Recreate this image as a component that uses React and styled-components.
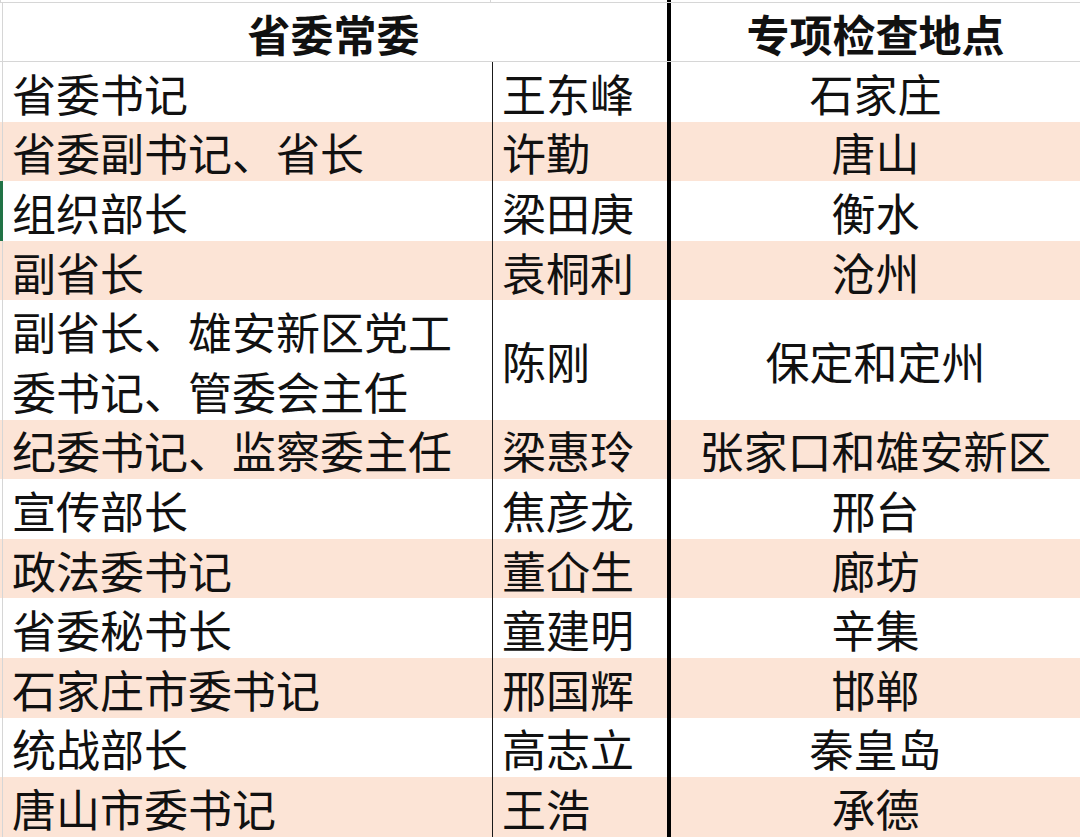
import React from "react";
import styled, { createGlobalStyle } from "styled-components";

const GlobalStyle = createGlobalStyle`
  html, body {
    margin: 0;
    padding: 0;
    background: #ffffff;
  }
  body {
    font-family: "Noto Sans CJK SC", "Noto Sans", sans-serif;
    color: #111;
  }
`;

const ROW_H = 59.6;
const PINK = "#fce4d6";

const Sheet = styled.div`
  width: 1080px;
  height: 837px;
  overflow: hidden;
  position: relative;
  background: #fff;
`;

const TopStrip = styled.div`
  display: grid;
  grid-template-columns: 490px 177px 4px 1fr;
  height: 3px;
  border-bottom: 1px solid #d6d6d6;
  box-sizing: border-box;
`;

const StripCell = styled.div`
  border-left: ${(p) => (p.$thick ? "4px solid #000" : "1px solid #d6d6d6")};
`;

const Row = styled.div`
  position: relative;
  display: grid;
  grid-template-columns: 492px 175px 1fr;
  height: ${(p) => (p.$tall ? ROW_H * 2 : ROW_H)}px;
  background: ${(p) => (p.$shade ? PINK : "#fff")};
  box-sizing: border-box;
  font-size: 44px;
  line-height: 1;

  &::before {
    content: "";
    position: absolute;
    left: 2px;
    top: 0;
    bottom: 0;
    width: 1px;
    background: #d6d6d6;
  }

  &::after {
    content: "";
    display: ${(p) => (p.$marked ? "block" : "none")};
    position: absolute;
    left: 0;
    top: 0;
    bottom: 0;
    width: 3px;
    background: #217346;
  }
`;

const HeaderRow = styled(Row)`
  grid-template-columns: 667px 1fr;
  height: 59px;
  border-bottom: 1px solid #d6d6d6;
  font-weight: 700;
  font-size: 43px;
`;

const HeaderCell = styled.div`
  display: flex;
  align-items: center;
  justify-content: center;
  padding-top: 2px;
  box-sizing: border-box;
  border-left: ${(p) => (p.$thick ? "4px solid #000" : "none")};
`;

const TitleCell = styled.div`
  display: flex;
  flex-direction: column;
  justify-content: center;
  gap: 16px;
  padding: 2px 0 0 12px;
  box-sizing: border-box;
  white-space: nowrap;
`;

const PersonCell = styled.div`
  display: flex;
  align-items: center;
  padding: 2px 0 0 9px;
  box-sizing: border-box;
  border-left: 1.5px solid #1a1a1a;
  white-space: nowrap;
`;

const PlaceCell = styled.div`
  display: flex;
  align-items: center;
  justify-content: center;
  padding-top: 2px;
  box-sizing: border-box;
  border-left: 4px solid #000;
  white-space: nowrap;
`;

const rows = [
  { title: ["省委书记"], name: "王东峰", place: "石家庄" },
  { title: ["省委副书记、省长"], name: "许勤", place: "唐山" },
  { title: ["组织部长"], name: "梁田庚", place: "衡水", marked: true },
  { title: ["副省长"], name: "袁桐利", place: "沧州" },
  {
    title: ["副省长、雄安新区党工", "委书记、管委会主任"],
    name: "陈刚",
    place: "保定和定州",
  },
  { title: ["纪委书记、监察委主任"], name: "梁惠玲", place: "张家口和雄安新区" },
  { title: ["宣传部长"], name: "焦彦龙", place: "邢台" },
  { title: ["政法委书记"], name: "董仚生", place: "廊坊" },
  { title: ["省委秘书长"], name: "童建明", place: "辛集" },
  { title: ["石家庄市委书记"], name: "邢国辉", place: "邯郸" },
  { title: ["统战部长"], name: "高志立", place: "秦皇岛" },
  { title: ["唐山市委书记"], name: "王浩", place: "承德" },
];

export default function App() {
  return (
    <>
      <GlobalStyle />
      <Sheet>
        <TopStrip>
          <StripCell />
          <StripCell />
          <StripCell $thick />
          <div />
        </TopStrip>
        <HeaderRow>
          <HeaderCell>省委常委</HeaderCell>
          <HeaderCell $thick>专项检查地点</HeaderCell>
        </HeaderRow>
        {rows.map((r, i) => (
          <Row
            key={r.name}
            $shade={i % 2 === 1}
            $tall={r.title.length > 1}
            $marked={r.marked}
          >
            <TitleCell>
              {r.title.map((t) => (
                <span key={t}>{t}</span>
              ))}
            </TitleCell>
            <PersonCell>{r.name}</PersonCell>
            <PlaceCell>{r.place}</PlaceCell>
          </Row>
        ))}
      </Sheet>
    </>
  );
}
